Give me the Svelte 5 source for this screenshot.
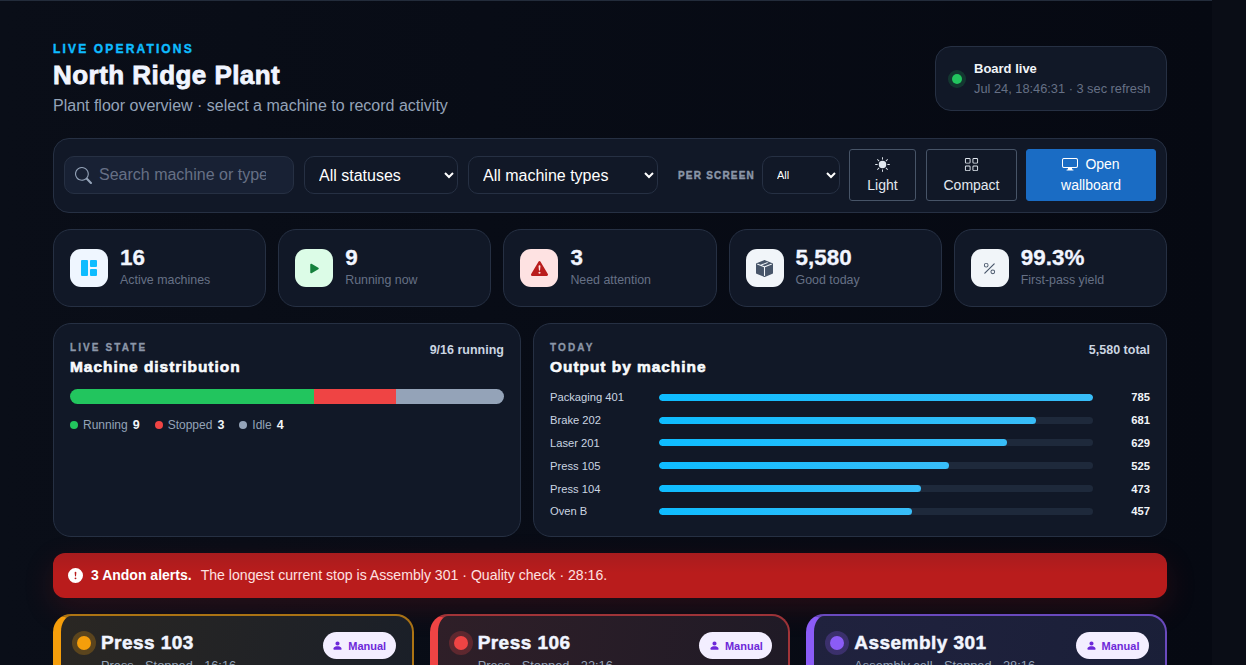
<script lang="ts">
  const kpis = [
    { value: '16', label: 'Active machines', tone: 'blue', icon: 'grid' },
    { value: '9', label: 'Running now', tone: 'green', icon: 'play' },
    { value: '3', label: 'Need attention', tone: 'red', icon: 'warn' },
    { value: '5,580', label: 'Good today', tone: 'slate', icon: 'box' },
    { value: '99.3%', label: 'First-pass yield', tone: 'slate', icon: 'percent' }
  ];
  const icons: Record<string, string> = {
    grid: 'M0 1a1 1 0 0 1 1-1h5a1 1 0 0 1 1 1v14a1 1 0 0 1-1 1H1a1 1 0 0 1-1-1V1zm9 0a1 1 0 0 1 1-1h5a1 1 0 0 1 1 1v5a1 1 0 0 1-1 1h-5a1 1 0 0 1-1-1V1zm0 9a1 1 0 0 1 1-1h5a1 1 0 0 1 1 1v5a1 1 0 0 1-1 1h-5a1 1 0 0 1-1-1v-5z',
    play: 'm11.596 8.697-6.363 3.692c-.54.313-1.233-.066-1.233-.697V4.308c0-.63.692-1.01 1.233-.696l6.363 3.692a.802.802 0 0 1 0 1.393z',
    warn: 'M8.982 1.566a1.13 1.13 0 0 0-1.96 0L.165 13.233c-.457.778.091 1.767.98 1.767h13.713c.889 0 1.438-.99.98-1.767L8.982 1.566zM8 5c.535 0 .954.462.9.995l-.35 3.507a.552.552 0 0 1-1.1 0L7.1 5.995A.905.905 0 0 1 8 5zm.002 6a1 1 0 1 1 0 2 1 1 0 0 1 0-2z',
    box: 'M15.528 2.973a.75.75 0 0 1 .472.696v8.662a.75.75 0 0 1-.472.696l-7.25 2.9a.75.75 0 0 1-.557 0l-7.25-2.9A.75.75 0 0 1 0 12.331V3.669a.75.75 0 0 1 .471-.696L7.443.184l.01-.003.268-.108a.75.75 0 0 1 .558 0l.269.108.01.003 6.97 2.789ZM10.404 2 4.25 4.461 1.846 3.5 1 3.839v.4l6.5 2.6v7.922l.5.2.5-.2V6.84l6.5-2.6v-.4l-.846-.339L8 5.961 5.596 5l6.154-2.461L10.404 2Z',
    percent: 'M13.442 2.558a.625.625 0 0 1 0 .884l-10 10a.625.625 0 1 1-.884-.884l10-10a.625.625 0 0 1 .884 0zM4.5 6a1.5 1.5 0 1 1 0-3 1.5 1.5 0 0 1 0 3zm0 1a2.5 2.5 0 1 0 0-5 2.5 2.5 0 0 0 0 5zm7 6a1.5 1.5 0 1 1 0-3 1.5 1.5 0 0 1 0 3zm0 1a2.5 2.5 0 1 0 0-5 2.5 2.5 0 0 0 0 5z',
    search: 'M11.742 10.344a6.5 6.5 0 1 0-1.397 1.398h-.001c.03.04.062.078.098.115l3.85 3.85a1 1 0 0 0 1.415-1.414l-3.85-3.85a1.007 1.007 0 0 0-.115-.1zM12 6.5a5.5 5.5 0 1 1-11 0 5.5 5.5 0 0 1 11 0z',
    sun: 'M8 12a4 4 0 1 0 0-8 4 4 0 0 0 0 8zM8 0a.5.5 0 0 1 .5.5v2a.5.5 0 0 1-1 0v-2A.5.5 0 0 1 8 0zm0 13a.5.5 0 0 1 .5.5v2a.5.5 0 0 1-1 0v-2A.5.5 0 0 1 8 13zm8-5a.5.5 0 0 1-.5.5h-2a.5.5 0 0 1 0-1h2a.5.5 0 0 1 .5.5zM3 8a.5.5 0 0 1-.5.5h-2a.5.5 0 0 1 0-1h2A.5.5 0 0 1 3 8zm10.657-5.657a.5.5 0 0 1 0 .707l-1.414 1.415a.5.5 0 1 1-.707-.708l1.414-1.414a.5.5 0 0 1 .707 0zm-9.193 9.193a.5.5 0 0 1 0 .707L3.05 13.657a.5.5 0 0 1-.707-.707l1.414-1.414a.5.5 0 0 1 .707 0zm9.193 2.121a.5.5 0 0 1-.707 0l-1.414-1.414a.5.5 0 0 1 .707-.707l1.414 1.414a.5.5 0 0 1 0 .707zM4.464 4.465a.5.5 0 0 1-.707 0L2.343 3.05a.5.5 0 1 1 .707-.707l1.414 1.414a.5.5 0 0 1 0 .708z',
    tiles: 'M1 2.5A1.5 1.5 0 0 1 2.5 1h3A1.5 1.5 0 0 1 7 2.5v3A1.5 1.5 0 0 1 5.5 7h-3A1.5 1.5 0 0 1 1 5.5v-3zM2.5 2a.5.5 0 0 0-.5.5v3a.5.5 0 0 0 .5.5h3a.5.5 0 0 0 .5-.5v-3a.5.5 0 0 0-.5-.5h-3zm6.5.5A1.5 1.5 0 0 1 10.5 1h3A1.5 1.5 0 0 1 15 2.5v3A1.5 1.5 0 0 1 13.5 7h-3A1.5 1.5 0 0 1 9 5.5v-3zm1.5-.5a.5.5 0 0 0-.5.5v3a.5.5 0 0 0 .5.5h3a.5.5 0 0 0 .5-.5v-3a.5.5 0 0 0-.5-.5h-3zM1 10.5A1.5 1.5 0 0 1 2.5 9h3A1.5 1.5 0 0 1 7 10.5v3A1.5 1.5 0 0 1 5.5 15h-3A1.5 1.5 0 0 1 1 13.5v-3zm1.5-.5a.5.5 0 0 0-.5.5v3a.5.5 0 0 0 .5.5h3a.5.5 0 0 0 .5-.5v-3a.5.5 0 0 0-.5-.5h-3zm6.5.5A1.5 1.5 0 0 1 10.5 9h3a1.5 1.5 0 0 1 1.5 1.5v3a1.5 1.5 0 0 1-1.5 1.5h-3A1.5 1.5 0 0 1 9 13.5v-3zm1.5-.5a.5.5 0 0 0-.5.5v3a.5.5 0 0 0 .5.5h3a.5.5 0 0 0 .5-.5v-3a.5.5 0 0 0-.5-.5h-3z',
    display: 'M0 4s0-2 2-2h12s2 0 2 2v6s0 2-2 2h-4c0 .667.083 1.167.25 1.5H11a.5.5 0 0 1 0 1H5a.5.5 0 0 1 0-1h.75c.167-.333.25-.833.25-1.5H2s-2 0-2-2V4zm1.398-.855a.758.758 0 0 0-.254.302A1.46 1.46 0 0 0 1 4.01V10c0 .325.078.502.145.602.07.105.17.188.302.254a1.464 1.464 0 0 0 .538.143L2.01 11H14c.325 0 .502-.078.602-.145a.758.758 0 0 0 .254-.302 1.464 1.464 0 0 0 .143-.538L15 9.99V4c0-.325-.078-.502-.145-.602a.757.757 0 0 0-.302-.254A1.46 1.46 0 0 0 13.99 3H2c-.325 0-.502.078-.602.145z',
    alert: 'M16 8A8 8 0 1 1 0 8a8 8 0 0 1 16 0zM8 4a.905.905 0 0 0-.9.995l.35 3.507a.552.552 0 0 0 1.1 0l.35-3.507A.905.905 0 0 0 8 4zm.002 6a1 1 0 1 0 0 2 1 1 0 0 0 0-2z',
    person: 'M3 14s-1 0-1-1 1-4 6-4 6 3 6 4-1 1-1 1H3Zm5-6a3 3 0 1 0 0-6 3 3 0 0 0 0 6Z'
  };
  const legend = [
    { label: 'Running', count: 9, tone: 'running' },
    { label: 'Stopped', count: 3, tone: 'stopped' },
    { label: 'Idle', count: 4, tone: 'idle' }
  ];
  const output = [
    { name: 'Packaging 401', qty: 785, pct: 100 },
    { name: 'Brake 202', qty: 681, pct: 86.8 },
    { name: 'Laser 201', qty: 629, pct: 80.2 },
    { name: 'Press 105', qty: 525, pct: 66.9 },
    { name: 'Press 104', qty: 473, pct: 60.3 },
    { name: 'Oven B', qty: 457, pct: 58.2 }
  ];
  const machines = [
    { name: 'Press 103', meta: 'Press · Stopped · 16:16', tone: 'amber' },
    { name: 'Press 106', meta: 'Press · Stopped · 22:16', tone: 'rose' },
    { name: 'Assembly 301', meta: 'Assembly cell · Stopped · 28:16', tone: 'violet' }
  ];
</script>

{#snippet icon(name: string, size: number)}
  <svg width={size} height={size} viewBox="0 0 16 16" fill="currentColor" aria-hidden="true"><path d={icons[name]} /></svg>
{/snippet}

<div class="page">
  <header class="top">
    <div>
      <div class="eyebrow">LIVE OPERATIONS</div>
      <h1>North Ridge Plant</h1>
      <p class="sub">Plant floor overview · select a machine to record activity</p>
    </div>
    <div class="live">
      <span class="live-dot"></span>
      <div>
        <div class="live-title">Board live</div>
        <div class="live-meta">Jul 24, 18:46:31 · 3 sec refresh</div>
      </div>
    </div>
  </header>

  <section class="toolbar">
    <label class="search">
      <span class="search-icon">{@render icon('search', 17)}</span>
      <input placeholder="Search machine or type" />
    </label>
    <select class="sel status"><option>All statuses</option></select>
    <select class="sel types"><option>All machine types</option></select>
    <span class="per">PER SCREEN</span>
    <select class="sel small"><option>All</option></select>
    <button class="btn light"><span class="ico">{@render icon('sun', 15)}</span>Light</button>
    <button class="btn compact"><span class="ico">{@render icon('tiles', 15)}</span>Compact</button>
    <button class="btn primary"><span class="ico-inline">{@render icon('display', 16)}</span>Open wallboard</button>
  </section>

  <section class="kpis">
    {#each kpis as k}
      <div class="kpi">
        <div class="kpi-icon {k.tone}">{@render icon(k.icon, k.icon === 'grid' ? 16 : k.icon === 'percent' ? 15 : 17)}</div>
        <div>
          <div class="kpi-value">{k.value}</div>
          <div class="kpi-label">{k.label}</div>
        </div>
      </div>
    {/each}
  </section>

  <section class="panels">
    <div class="panel">
      <div class="panel-head">
        <div>
          <div class="kicker">LIVE STATE</div>
          <h2>Machine distribution</h2>
        </div>
        <span class="panel-note">9/16 running</span>
      </div>
      <div class="dist">
        <span class="seg running" style="width: 56.25%"></span>
        <span class="seg stopped" style="width: 18.75%"></span>
        <span class="seg idle" style="width: 25%"></span>
      </div>
      <div class="legend">
        {#each legend as l}
          <span class="legend-item"><i class="seg-dot {l.tone}"></i>{l.label}<b>{l.count}</b></span>
        {/each}
      </div>
    </div>
    <div class="panel">
      <div class="panel-head">
        <div>
          <div class="kicker">TODAY</div>
          <h2>Output by machine</h2>
        </div>
        <span class="panel-note">5,580 total</span>
      </div>
      <div class="rows">
        {#each output as r}
          <div class="row">
            <span class="row-name">{r.name}</span>
            <span class="track"><span class="fill" style="width: {r.pct}%"></span></span>
            <span class="row-qty">{r.qty}</span>
          </div>
        {/each}
      </div>
    </div>
  </section>

  <section class="alert">
    <span class="alert-icon">{@render icon('alert', 15)}</span>
    <strong>3 Andon alerts.</strong>
    <span>The longest current stop is Assembly 301 · Quality check · 28:16.</span>
  </section>

  <section class="cards">
    {#each machines as m}
      <article class="card {m.tone}">
        <span class="state-dot"></span>
        <div class="card-body">
          <div class="card-name">{m.name}</div>
          <div class="card-meta">{m.meta}</div>
        </div>
        <span class="chip">{@render icon('person', 11)}Manual</span>
      </article>
    {/each}
  </section>
</div>

<style>
:global(html), :global(body) { height: 100%; overflow: hidden; }
:global(body) { margin: 0; background: #0a0d16; font-family: "Liberation Sans", Arial, sans-serif; color: #f1f5f9; }
* { box-sizing: border-box; }
.page { width: 1212px; height: 665px; overflow: hidden; padding: 41px 45px 0 53px; border-top: 1px solid #232c3b; background: linear-gradient(90deg, #0a0e18 0%, #080c16 40%, #060912 100%); }

.top { display: flex; justify-content: space-between; align-items: flex-start; height: 96px; }
.eyebrow { font-size: 12px; line-height: 14px; font-weight: 700; letter-spacing: 0.18em; color: #0ebcff; -webkit-text-stroke: 0.4px #0ebcff; }
h1 { margin: 4px 0 0; font-size: 26px; line-height: 30px; font-weight: 800; color: #f1f5ff; letter-spacing: 0.45px; -webkit-text-stroke: 0.8px #f1f5ff; }
.sub { margin: 6px 0 0; font-size: 16px; line-height: 20px; color: #94a3b8; }
.live { display: flex; align-items: center; gap: 12px; width: 232px; height: 65px; margin-top: 4px; padding: 0 16px; background: #111827; border: 1px solid #263043; border-radius: 16px; }
.live-dot { width: 10px; height: 10px; border-radius: 50%; background: #22c55e; box-shadow: 0 0 0 4px rgba(34, 197, 94, 0.18); flex-shrink: 0; }
.live-title { font-size: 13px; line-height: 16px; font-weight: 700; color: #f1f5f9; }
.live-meta { font-size: 12.8px; line-height: 16px; margin-top: 4px; color: #667085; white-space: nowrap; }

.toolbar { display: flex; align-items: center; height: 75px; padding: 0 10px 1px; background: #111827; border: 1px solid #263043; border-radius: 16px; }
.toolbar > * { flex-shrink: 0; }
.search { display: flex; align-items: center; gap: 7px; width: 230px; height: 38px; padding: 0 27px 0 10px; background: #182134; border: 1px solid #263043; border-radius: 10px; color: #94a3b8; }
.search-icon { display: flex; }
.search input { flex: 1; min-width: 0; width: 100%; border: 0; outline: 0; padding: 0; background: transparent; font: 16px "Liberation Sans", Arial, sans-serif; color: #fff; }
.search input::placeholder { color: #667085; }
.sel { height: 38px; padding: 0 6px 0 10px; background: #111827; border: 1px solid #263043; border-radius: 10px; color: #fff; font: 16px "Liberation Sans", Arial, sans-serif; }
.status { width: 154px; margin-left: 10px; }
.types { width: 190px; margin-left: 10px; }
.small { width: 78px; margin-left: 7px; font-size: 11px; padding-left: 10px; }
.per { width: 77px; margin-left: 20px; font-size: 10px; font-weight: 700; letter-spacing: 0.12em; color: #8b96a8; -webkit-text-stroke: 0.4px #8b96a8; white-space: nowrap; }
.btn { height: 52px; border-radius: 3px; font: 14px/21px "Liberation Sans", Arial, sans-serif; color: #e2e8f0; background: #111827; border: 1px solid #475467; padding: 0; text-align: center; }
.btn .ico { display: flex; justify-content: center; height: 20px; align-items: center; }
.ico-inline { display: inline-flex; vertical-align: -3px; margin-right: 7px; }
.light { width: 67px; margin-left: 9px; }
.compact { width: 91px; margin-left: 10px; }
.primary { width: 130px; margin-left: 9px; padding: 0 24px; background: #1a6cc4; border-color: #1a6cc4; color: #fff; }

.kpis { display: grid; grid-template-columns: repeat(5, 1fr); gap: 12px; margin-top: 16px; }
.kpi { display: flex; align-items: flex-start; gap: 12px; height: 78px; padding: 19px 16px; background: #111827; border: 1px solid #263043; border-radius: 18px; }
.kpi-icon { display: flex; align-items: center; justify-content: center; width: 38px; height: 38px; border-radius: 11px; flex-shrink: 0; }
.kpi-icon.blue { background: #eff6ff; color: #0ebcff; }
.kpi-icon.green { background: #dcfce7; color: #15803d; }
.kpi-icon.red { background: #fee2e2; color: #b91c1c; }
.kpi-icon.slate { background: #f1f5f9; color: #475569; }
.kpi-value { margin-top: -5px; font-size: 22.4px; line-height: 28px; font-weight: 700; color: #f1f5ff; -webkit-text-stroke: 0.3px #f1f5ff; }
.kpi-label { font-size: 12.4px; line-height: 16px; margin-top: 0; color: #667085; }

.panels { display: grid; grid-template-columns: 468px 1fr; gap: 12px; margin-top: 16px; }
.panel { height: 214px; padding: 17px 16px 16px; background: #111827; border: 1px solid #263043; border-radius: 18px; }
.panel-head { display: flex; justify-content: space-between; align-items: flex-start; }
.kicker { font-size: 10px; line-height: 14px; font-weight: 700; letter-spacing: 0.21em; color: #8b96a8; -webkit-text-stroke: 0.3px #8b96a8; }
h2 { margin: 2px 0 0; font-size: 15.5px; line-height: 20px; font-weight: 800; color: #f8fafc; letter-spacing: 0.95px; -webkit-text-stroke: 0.6px #f8fafc; }
.panel-note { font-size: 12.5px; line-height: 18px; font-weight: 700; color: #cbd5e1; }
.dist { display: flex; height: 15px; margin-top: 12px; border-radius: 8px; overflow: hidden; }
.seg { display: block; height: 100%; }
.running { background: #22c55e; }
.stopped { background: #ef4444; }
.idle { background: #94a3b8; }
.legend { display: flex; gap: 15px; margin-top: 13px; font-size: 12px; line-height: 16px; color: #94a3b8; }
.legend-item { display: flex; align-items: center; }
.legend-item b { margin-left: 5px; color: #f1f5f9; font-size: 12.5px; }
.seg-dot { display: block; width: 8px; height: 8px; margin-right: 5px; border-radius: 50%; }
.rows { margin-top: 9px; }
.row { display: grid; grid-template-columns: 109px 434px 57px; align-items: center; height: 22.8px; font-size: 11.2px; }
.row-name { color: #cbd5e1; }
.track { display: block; height: 7px; background: #1e293b; border-radius: 4px; overflow: hidden; }
.fill { display: block; height: 100%; border-radius: 4px; background: linear-gradient(90deg, #0ebcff, #38bdf8); }
.row-qty { text-align: right; font-weight: 700; color: #f1f5f9; }

.alert { display: flex; align-items: center; gap: 8px; height: 45px; margin-top: 16px; padding: 0 15px 1px; background: linear-gradient(180deg, #a81c1e, #b91c1c 45%); border-radius: 12px; font-size: 14.1px; color: #fee2e2; box-shadow: 0 10px 30px rgba(185, 28, 28, 0.18); }
.alert strong { color: #fff; font-size: 14px; margin-right: 1px; }
.alert-icon { display: flex; color: #fff; }

.cards { display: grid; grid-template-columns: repeat(3, 1fr); gap: 16px; margin-top: 16px; }
.card { display: flex; align-items: flex-start; height: 120px; padding: 14px 16px 0 12px; border-radius: 18px; border: 2px solid; border-left-width: 8px; }
.card.amber { border-color: rgba(245, 158, 11, 0.65); border-left-color: #f59e0b; background: linear-gradient(100deg, #2a2723, #1a1f28); --dot: #f59e0b; }
.card.rose { border-color: rgba(239, 68, 68, 0.6); border-left-color: #ef4444; background: linear-gradient(100deg, #2f1f28, #1f1a26); --dot: #ef4444; }
.card.violet { border-color: rgba(139, 92, 246, 0.7); border-left-color: #8b5cf6; background: linear-gradient(100deg, #20223e, #1a1f38); --dot: #8b5cf6; }
.state-dot { width: 14px; height: 14px; margin: 6px 10px 0 4px; border-radius: 50%; background: var(--dot); box-shadow: 0 0 0 5px color-mix(in srgb, var(--dot) 25%, transparent); flex-shrink: 0; }
.card-body { flex: 1; min-width: 0; }
.card-name { font-size: 19px; line-height: 26px; font-weight: 800; letter-spacing: 0.45px; color: #f1f5ff; -webkit-text-stroke: 0.5px #f1f5ff; }
.card-meta { margin-top: 2px; font-size: 12.8px; color: #94a3b8; }
.chip { display: flex; align-items: center; gap: 5px; height: 27px; margin-top: 2px; padding: 0 9.5px; background: #f3eeff; color: #6d28d9; border-radius: 14px; font-size: 11px; font-weight: 700; }
</style>
